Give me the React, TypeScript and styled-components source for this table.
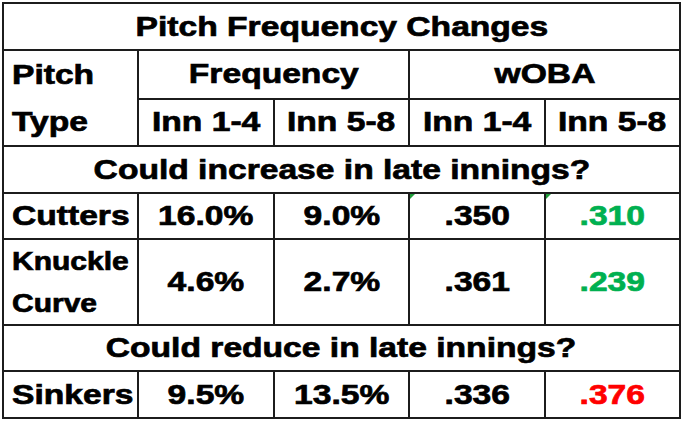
import React from "react";
import styled, { createGlobalStyle } from "styled-components";

const GlobalStyle = createGlobalStyle`
  body {
    margin: 0;
    background: #fff;
    font-family: "Liberation Sans", Arial, sans-serif;
  }
`;

const Page = styled.div`
  padding: 2px 0 0 2px;
`;

const Table = styled.table`
  width: 679px;
  border-collapse: collapse;
  table-layout: fixed;
  color: #000;
  font-size: 28px;
  font-weight: 700;

  td {
    border: 2px solid #1c1c1c;
    padding: 0;
    position: relative;
  }
`;

const Row = styled.tr<{ $h: number }>`
  height: ${(p) => p.$h}px;
`;

const Stretch = styled.span<{ $left?: boolean; $size?: number }>`
  display: inline-block;
  white-space: nowrap;
  font-size: ${(p) => p.$size || 28}px;
  -webkit-text-stroke: 0.7px currentColor;
  transform: scaleX(1.2);
  transform-origin: ${(p) => (p.$left ? "left center" : "center")};
`;

const CenterCell = styled.td<{ $color?: string }>`
  text-align: center;
  vertical-align: middle;
  line-height: 1;
  color: ${(p) => p.$color || "#000"};
`;

const LabelCell = styled.td<{ $lh?: number }>`
  text-align: left;
  vertical-align: middle;
  line-height: ${(p) => p.$lh || 30}px;
  padding-left: 8px !important;
`;

const Flagged = styled(CenterCell)`
  &::before {
    content: "";
    position: absolute;
    left: 0;
    top: 0;
    border-top: 5px solid #1f9d3a;
    border-right: 5px solid transparent;
  }
`;

const GREEN = "#00b050";
const RED = "#ff0000";

const App = () => {
  return (
    <Page>
      <GlobalStyle />
      <Table>
        <colgroup>
          <col style={{ width: "20%" }} />
          <col style={{ width: "20%" }} />
          <col style={{ width: "20%" }} />
          <col style={{ width: "20%" }} />
          <col style={{ width: "20%" }} />
        </colgroup>
        <tbody>
          <Row $h={47}>
            <CenterCell colSpan={5}>
              <Stretch>Pitch Frequency Changes</Stretch>
            </CenterCell>
          </Row>
          <Row $h={47}>
            <LabelCell rowSpan={2} $lh={47}>
              <Stretch $left>Pitch</Stretch>
              <br />
              <Stretch $left>Type</Stretch>
            </LabelCell>
            <CenterCell colSpan={2}>
              <Stretch>Frequency</Stretch>
            </CenterCell>
            <CenterCell colSpan={2}>
              <Stretch>wOBA</Stretch>
            </CenterCell>
          </Row>
          <Row $h={46}>
            <CenterCell><Stretch>Inn 1-4</Stretch></CenterCell>
            <CenterCell><Stretch>Inn 5-8</Stretch></CenterCell>
            <CenterCell><Stretch>Inn 1-4</Stretch></CenterCell>
            <CenterCell><Stretch>Inn 5-8</Stretch></CenterCell>
          </Row>
          <Row $h={47}>
            <CenterCell colSpan={5}>
              <Stretch>Could increase in late innings?</Stretch>
            </CenterCell>
          </Row>
          <Row $h={46}>
            <LabelCell><Stretch $left>Cutters</Stretch></LabelCell>
            <CenterCell><Stretch>16.0%</Stretch></CenterCell>
            <CenterCell><Stretch>9.0%</Stretch></CenterCell>
            <Flagged><Stretch>.350</Stretch></Flagged>
            <Flagged $color={GREEN}><Stretch>.310</Stretch></Flagged>
          </Row>
          <Row $h={86}>
            <LabelCell $lh={42}>
              <Stretch $left $size={25}>Knuckle</Stretch>
              <br />
              <Stretch $left $size={25}>Curve</Stretch>
            </LabelCell>
            <CenterCell><Stretch>4.6%</Stretch></CenterCell>
            <CenterCell><Stretch>2.7%</Stretch></CenterCell>
            <CenterCell><Stretch>.361</Stretch></CenterCell>
            <CenterCell $color={GREEN}><Stretch>.239</Stretch></CenterCell>
          </Row>
          <Row $h={46}>
            <CenterCell colSpan={5}>
              <Stretch>Could reduce in late innings?</Stretch>
            </CenterCell>
          </Row>
          <Row $h={47}>
            <LabelCell><Stretch $left>Sinkers</Stretch></LabelCell>
            <CenterCell><Stretch>9.5%</Stretch></CenterCell>
            <CenterCell><Stretch>13.5%</Stretch></CenterCell>
            <CenterCell><Stretch>.336</Stretch></CenterCell>
            <CenterCell $color={RED}><Stretch>.376</Stretch></CenterCell>
          </Row>
        </tbody>
      </Table>
    </Page>
  );
};

export default App;
